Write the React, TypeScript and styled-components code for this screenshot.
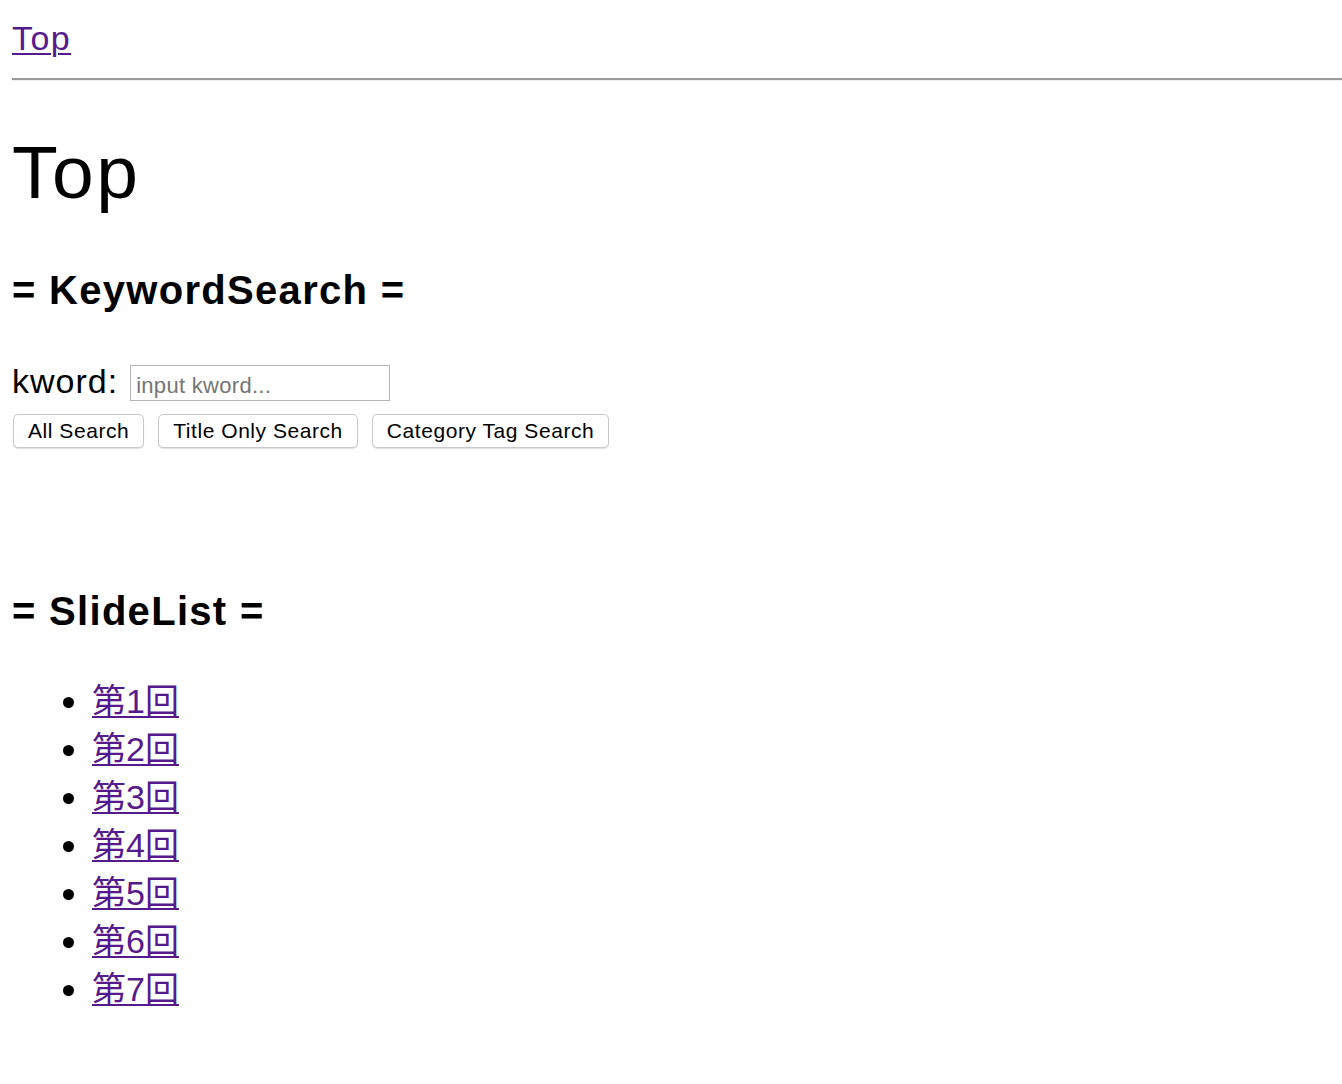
import { createGlobalStyle } from "styled-components";
import styled from "styled-components";

const GlobalStyle = createGlobalStyle`
  html, body {
    margin: 0;
    padding: 0;
    background: #fff;
  }
  body {
    font-family: "Liberation Sans", "Noto Sans CJK JP", sans-serif;
    color: #000;
  }
`;

const Page = styled.div`
  padding: 12px 0 40px 12px;
`;

const Header = styled.div`
  font-size: 34px;
  line-height: 52px;
  letter-spacing: 1.4px;
`;

const NavLink = styled.a`
  color: #551a8b;
  text-decoration: underline;
  text-decoration-thickness: 2px;
  text-underline-offset: 3px;
`;

const Rule = styled.hr`
  margin: 14px 0 0 0;
  border: none;
  border-top: 2px solid #9a9a9a;
  border-bottom: 1px solid #eeeeee;
  height: 0;
`;

const Title = styled.h1`
  margin: 49px 0 0 0;
  font-size: 75px;
  line-height: 85px;
  font-weight: 400;
  letter-spacing: 2.5px;
`;

const Section = styled.h2<{ $gap: number }>`
  margin: ${({ $gap }) => $gap}px 0 0 0;
  font-size: 40px;
  line-height: 46px;
  font-weight: 700;
  letter-spacing: 1.3px;
`;

const FieldRow = styled.div`
  margin-top: 48px;
  display: flex;
  align-items: baseline;
  gap: 12px;
`;

const Label = styled.label`
  font-size: 34px;
  line-height: 40px;
  letter-spacing: 1px;
`;

const TextInput = styled.input`
  box-sizing: border-box;
  width: 260px;
  height: 36px;
  padding: 6px 5px 0 5px;
  border: 1px solid #b5b5b5;
  font-family: "Liberation Sans", sans-serif;
  font-size: 22px;
  letter-spacing: 0.3px;
  color: #000;
  outline: none;

  &::placeholder {
    color: #757575;
  }
`;

const ButtonRow = styled.div`
  margin-top: 13px;
  display: flex;
  gap: 14px;
  padding-left: 1px;
`;

const Button = styled.button`
  box-sizing: border-box;
  height: 34px;
  padding: 0 14px;
  background: #fff;
  border: 1px solid #c9c9c9;
  border-radius: 5px;
  box-shadow: 0 1px 1px rgba(0, 0, 0, 0.12);
  font-family: "Liberation Sans", sans-serif;
  font-size: 21px;
  letter-spacing: 0.55px;
  color: #000;
`;

const SlideItems = styled.ul`
  margin: 42px 0 0 0;
  padding-left: 80px;
  list-style: disc;
  font-size: 34px;
  line-height: 48px;
`;

const SlideItem = styled.li`
  height: 48px;

  &::marker {
    font-size: 38px;
  }
`;

const slides = ["第1回", "第2回", "第3回", "第4回", "第5回", "第6回", "第7回"];

export default function App() {
  return (
    <Page>
      <GlobalStyle />
      <Header>
        <NavLink href="#">Top</NavLink>
      </Header>
      <Rule />
      <Title>Top</Title>
      <Section $gap={52}>= KeywordSearch =</Section>
      <FieldRow>
        <Label>kword:</Label>
        <TextInput placeholder="input kword..." />
      </FieldRow>
      <ButtonRow>
        <Button>All Search</Button>
        <Button>Title Only Search</Button>
        <Button>Category Tag Search</Button>
      </ButtonRow>
      <Section $gap={140}>= SlideList =</Section>
      <SlideItems>
        {slides.map((s) => (
          <SlideItem key={s}>
            <NavLink href="#">{s}</NavLink>
          </SlideItem>
        ))}
      </SlideItems>
    </Page>
  );
}
